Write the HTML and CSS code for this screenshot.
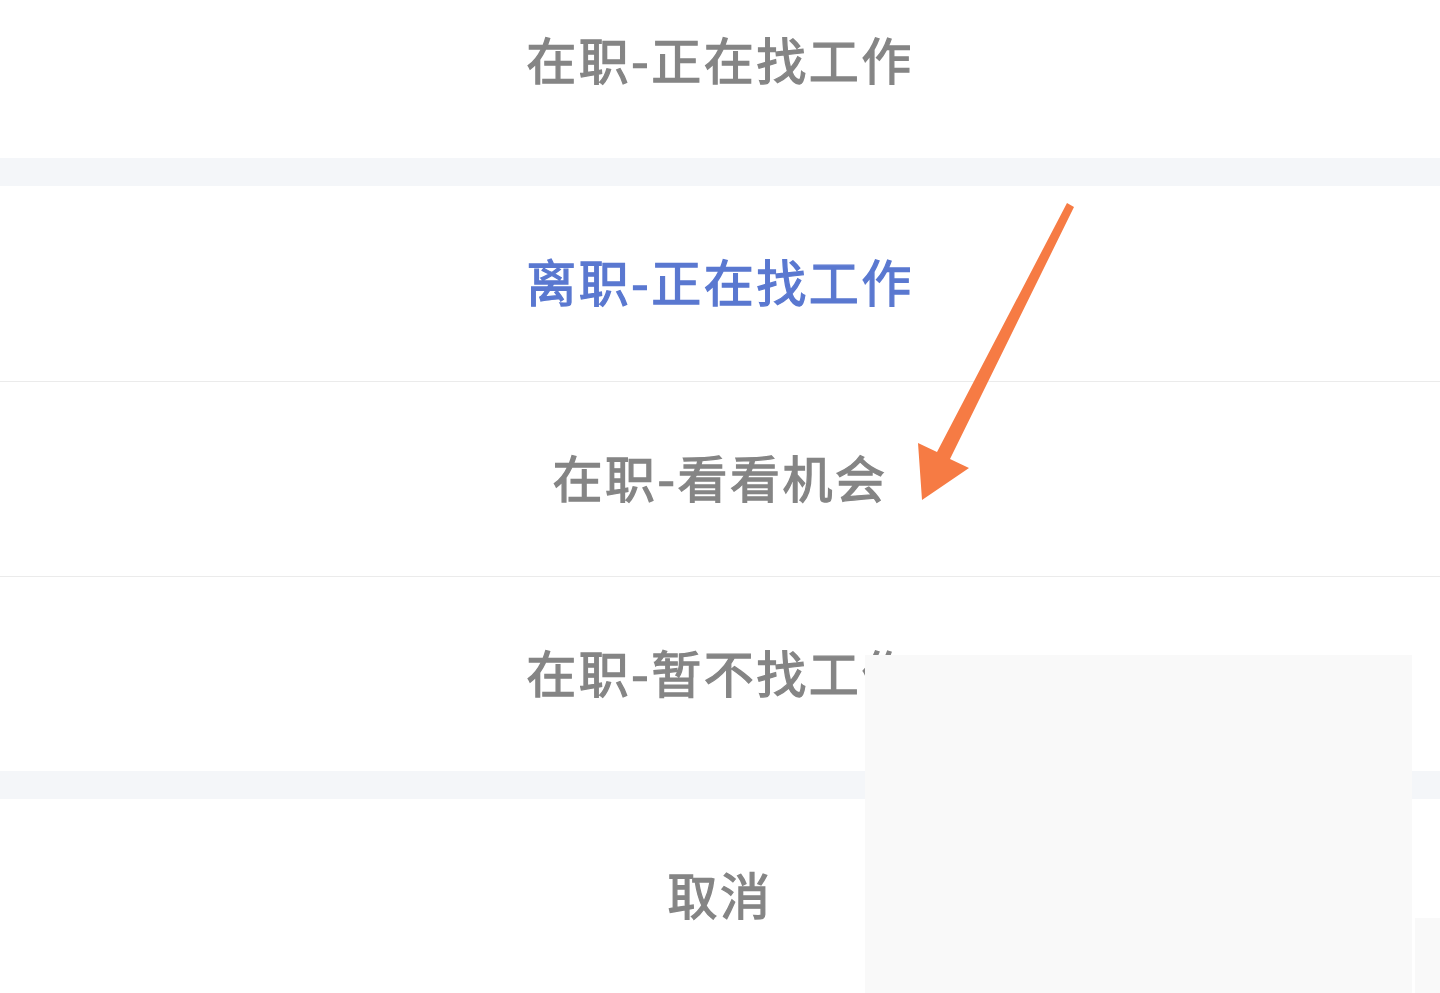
FILE: index.html
```html
<!DOCTYPE html>
<html lang="zh-CN">
<head>
<meta charset="utf-8">
<link rel="stylesheet" href="styles.css">
</head>
<body>
<div class="page">
  <div class="sheet">
    <div class="row first">在职-正在找工作</div>
    <div class="band"></div>
    <div class="row active">离职-正在找工作</div>
    <div class="line"></div>
    <div class="row">在职-看看机会</div>
    <div class="line"></div>
    <div class="row">在职-暂不找工作</div>
    <div class="band"></div>
    <div class="row">取消</div>
  </div>
  <div class="patch patch-a"></div>
  <div class="patch patch-b"></div>
  <svg class="arrow" width="1440" height="993" viewBox="0 0 1440 993">
    <polygon points="1067,203 1074,207 950,459 969,468 922,500 918,443 937,452" fill="#f67b44"/>
  </svg>
</div>
</body>
</html>
```
FILE: styles.css
```css
html, body {
  margin: 0;
  padding: 0;
  background: #ffffff;
}
.page {
  position: relative;
  width: 1440px;
  height: 993px;
  overflow: hidden;
}
.sheet {
  display: flex;
  flex-direction: column;
  margin-top: -36px;
}
.row {
  box-sizing: border-box;
  height: 194px;
  padding-bottom: 7px;
  display: flex;
  align-items: center;
  justify-content: center;
  font-family: "Noto Sans CJK SC", "Noto Sans", sans-serif;
  font-size: 50px;
  font-weight: 400;
  -webkit-text-stroke: 1.3px currentColor;
  letter-spacing: 2.5px;
  color: #858585;
  background: #ffffff;
}
.row.active {
  color: #5a78d0;
  height: 195px;
}
.band {
  height: 28px;
  background: #f4f6f9;
}
.line {
  height: 1px;
  background: #ebebeb;
}
.patch {
  position: absolute;
  background: #f9f9f9;
}
.patch-a {
  left: 865px;
  top: 655px;
  width: 547px;
  height: 338px;
}
.patch-b {
  left: 1415px;
  top: 918px;
  width: 25px;
  height: 75px;
}
.arrow {
  position: absolute;
  left: 0;
  top: 0;
}
```
